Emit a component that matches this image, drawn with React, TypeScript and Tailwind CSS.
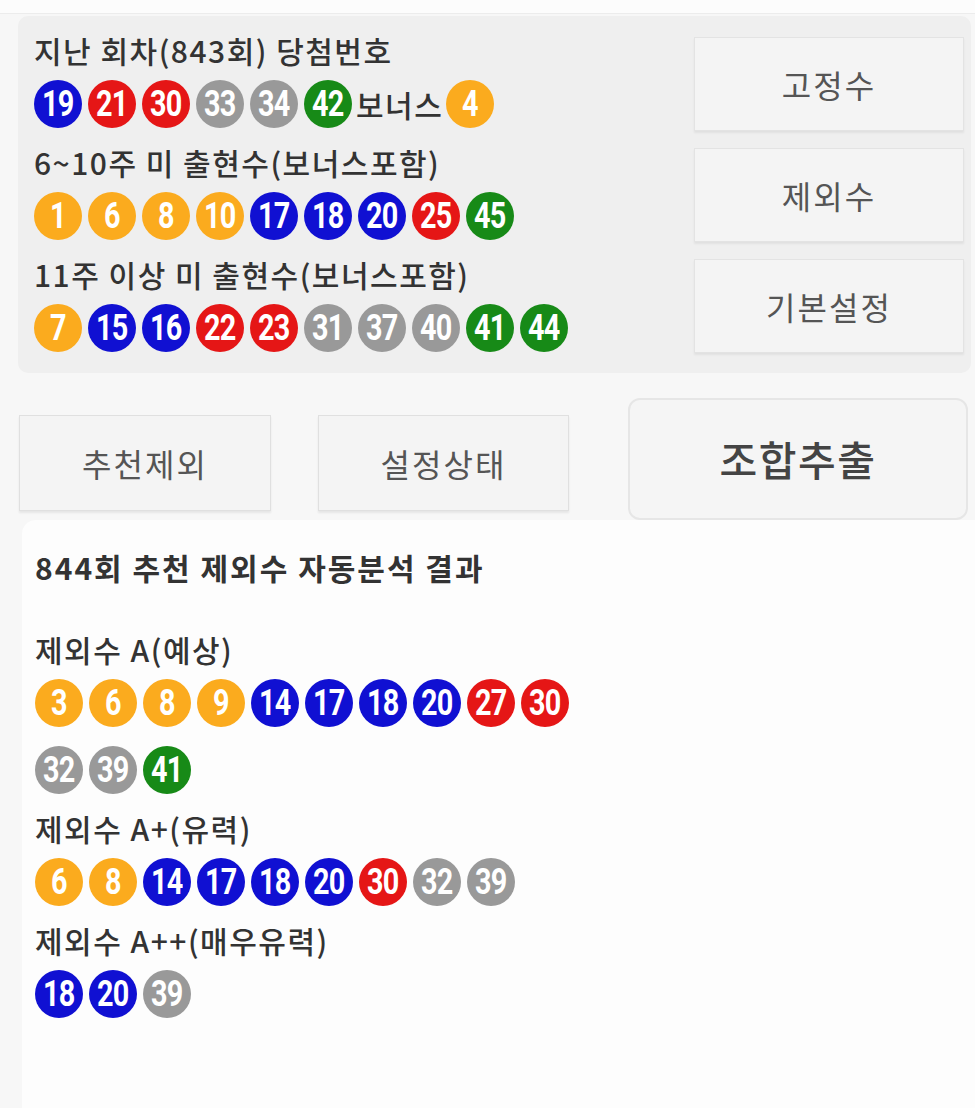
import React from "react";

type C = "y" | "b" | "r" | "g" | "n";

const colorOf = (n: number): C => {
  if (n <= 10) return "y";
  if (n <= 20) return "b";
  if (n <= 30) return "r";
  if (n <= 40) return "g";
  return "n";
};

const Ball = ({ n }: { n: number }) => {
  const c = colorOf(n);
  const cls =
    c === "y"
      ? "bg-[#fbab1e]"
      : c === "b"
      ? "bg-[#1010d2]"
      : c === "r"
      ? "bg-[#e51616]"
      : c === "g"
      ? "bg-[#999999]"
      : "bg-[#178a17]";
  return (
    <div
      className={`${cls} w-[48px] h-[48px] rounded-full flex items-center justify-center shrink-0 overflow-hidden`}
    >
      <span className="text-white font-bold text-[36px] leading-none tracking-[-1px] font-['Roboto',sans-serif] scale-x-[0.8] inline-block">
        {n}
      </span>
    </div>
  );
};

const Balls = ({ nums }: { nums: number[] }) => (
  <>
    {nums.map((n, i) => (
      <Ball key={i} n={n} />
    ))}
  </>
);

const Title = ({ children }: { children: React.ReactNode }) => (
  <div className="h-[54px] leading-[54px] text-[30px] tracking-[1.5px] text-[#333333] font-medium whitespace-nowrap">
    {children}
  </div>
);

const SideBtn = ({ label }: { label: string }) => (
  <div className="h-[94px] bg-[#f4f4f4] border border-[#e3e3e3] shadow-[0_2px_2px_rgba(0,0,0,0.06)] flex items-center justify-center text-[32px] tracking-[2px] text-[#555555]">
    {label}
  </div>
);

export default function App() {
  return (
    <div className="w-[975px] h-[1108px] overflow-hidden bg-[#f7f7f7] font-['Noto_Sans_CJK_KR','Noto_Sans',sans-serif]">
      <div className="h-[14px] bg-[#fcfcfc] border-b border-[#ececec]" />
      <div className="ml-[18px] mr-[4px] mt-[2px] h-[357px] rounded-[10px] bg-[#efefef] flex pl-[16px] pr-[7px]">
        <div className="flex-1 pt-[7px]">
          <Title>지난 회차(843회) 당첨번호</Title>
          <div className="h-[58px] pt-[3px] flex items-start gap-[6px]">
            <Balls nums={[19, 21, 30, 33, 34, 42]} />
            <span className="text-[30px] tracking-[1.5px] leading-[48px] text-[#333333] font-medium -ml-[2px] -mr-[3px]">보너스</span>
            <Ball n={4} />
          </div>
          <Title>6~10주 미 출현수(보너스포함)</Title>
          <div className="h-[58px] pt-[3px] flex items-start gap-[6px]">
            <Balls nums={[1, 6, 8, 10, 17, 18, 20, 25, 45]} />
          </div>
          <Title>11주 이상 미 출현수(보너스포함)</Title>
          <div className="h-[58px] pt-[3px] flex items-start gap-[6px]">
            <Balls nums={[7, 15, 16, 22, 23, 31, 37, 40, 41, 44]} />
          </div>
        </div>
        <div className="w-[270px] pt-[21px] flex flex-col gap-[17px]">
          <SideBtn label="고정수" />
          <SideBtn label="제외수" />
          <SideBtn label="기본설정" />
        </div>
      </div>

      <div className="h-[147px] flex items-start pt-[25px]">
        <div className="ml-[19px] mt-[17px] w-[252px] h-[96px] bg-[#f4f4f4] border border-[#e0e0e0] shadow-[0_2px_2px_rgba(0,0,0,0.07)] flex items-center justify-center text-[32px] tracking-[2px] text-[#555555]">
          추천제외
        </div>
        <div className="ml-[47px] mt-[17px] w-[251px] h-[96px] bg-[#f4f4f4] border border-[#e0e0e0] shadow-[0_2px_2px_rgba(0,0,0,0.07)] flex items-center justify-center text-[32px] tracking-[2px] text-[#555555]">
          설정상태
        </div>
        <div className="ml-[59px] w-[340px] h-[122px] rounded-[12px] bg-[#f5f5f5] border-2 border-[#e6e6e6] flex items-center justify-center text-[41px] tracking-[1.5px] text-[#444444] font-medium">
          조합추출
        </div>
      </div>

      <div className="ml-[22px] h-[600px] bg-[#fdfdfd] rounded-tl-[14px] pl-[13px] pt-[20px]">
        <div className="h-[54px] leading-[54px] text-[30px] tracking-[2px] text-[#333333] font-semibold whitespace-nowrap">
          844회 추천 제외수 자동분석 결과
        </div>
        <div className="h-[28px]" />
        <Title>제외수 A(예상)</Title>
        <div className="w-[560px] pt-[3px] pb-[7px] flex flex-wrap gap-x-[6px] gap-y-[19px]">
          <Balls nums={[3, 6, 8, 9, 14, 17, 18, 20, 27, 30, 32, 39, 41]} />
        </div>
        <Title>제외수 A+(유력)</Title>
        <div className="pt-[3px] pb-[7px] flex gap-[6px]">
          <Balls nums={[6, 8, 14, 17, 18, 20, 30, 32, 39]} />
        </div>
        <Title>제외수 A++(매우유력)</Title>
        <div className="pt-[3px] pb-[7px] flex gap-[6px]">
          <Balls nums={[18, 20, 39]} />
        </div>
      </div>
    </div>
  );
}
